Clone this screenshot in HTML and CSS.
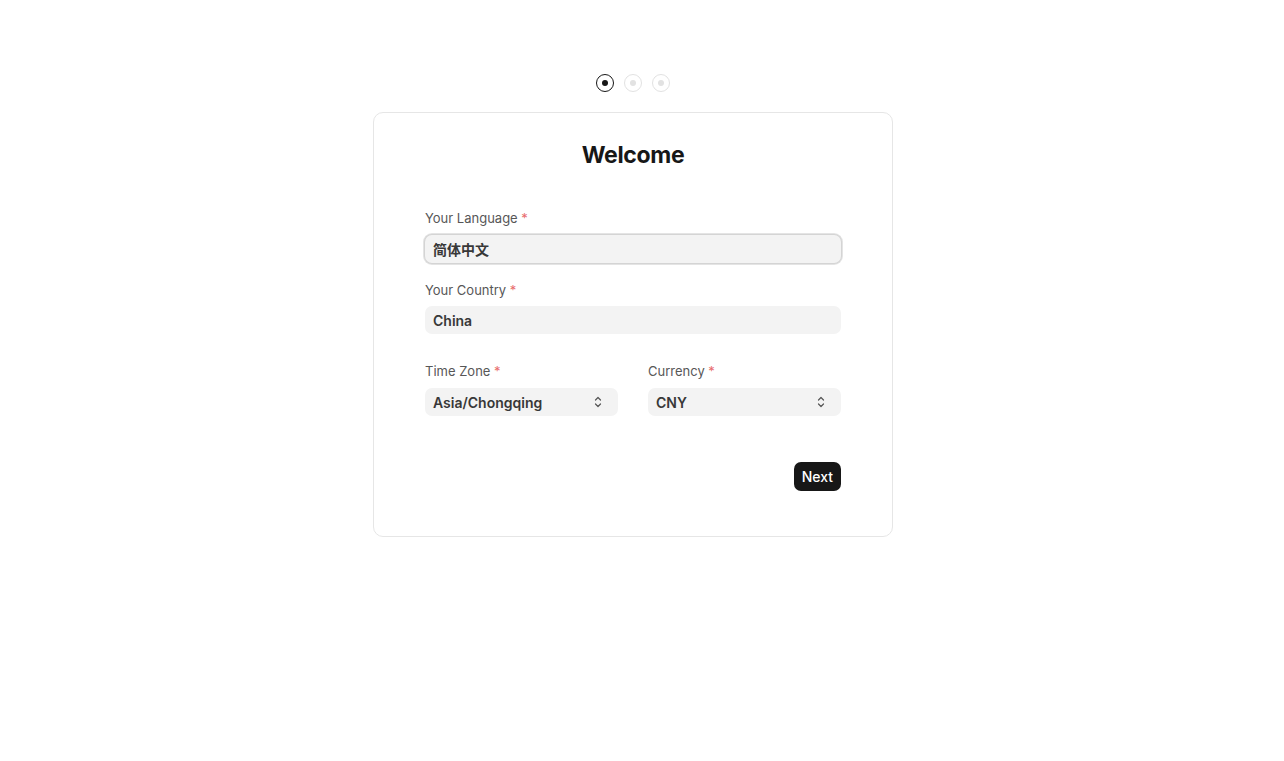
FILE: index.html
```html
<!DOCTYPE html>
<html>
<head>
<meta charset="utf-8">
<link rel="stylesheet" href="styles.css">
</head>
<body>
<div class="page">
  <div class="steps">
    <span class="step active"><span class="dot"></span></span>
    <span class="step"><span class="dot"></span></span>
    <span class="step"><span class="dot"></span></span>
  </div>
  <div class="card">
    <h1 class="title">Welcome</h1>
    <div class="field first">
      <div class="label">Your Language <span class="req">*</span></div>
      <div class="input focused">简体中文</div>
    </div>
    <div class="field second">
      <div class="label">Your Country <span class="req">*</span></div>
      <div class="input">China</div>
    </div>
    <div class="row">
      <div class="field col">
        <div class="label">Time Zone <span class="req">*</span></div>
        <div class="input select"><span>Asia/Chongqing</span>
          <svg class="chev" width="8" height="14" viewBox="0 0 8 14"><path d="M1.5 5 L4 2.5 L6.5 5 M1.5 9 L4 11.5 L6.5 9" fill="none" stroke="#555" stroke-width="1.2" stroke-linecap="round" stroke-linejoin="round"/></svg>
        </div>
      </div>
      <div class="field col">
        <div class="label">Currency <span class="req">*</span></div>
        <div class="input select"><span>CNY</span>
          <svg class="chev" width="8" height="14" viewBox="0 0 8 14"><path d="M1.5 5 L4 2.5 L6.5 5 M1.5 9 L4 11.5 L6.5 9" fill="none" stroke="#555" stroke-width="1.2" stroke-linecap="round" stroke-linejoin="round"/></svg>
        </div>
      </div>
    </div>
    <div class="actions">
      <button class="btn">Next</button>
    </div>
  </div>
</div>
</body>
</html>
```

FILE: styles.css
```css
html, body {
  margin: 0;
  padding: 0;
  background: #fff;
}
body {
  font-family: Inter, "Noto Sans CJK SC", sans-serif;
  color: #171717;
}
.page {
  padding-top: 74px;
  padding-right: 18px;
  display: flex;
  flex-direction: column;
  align-items: center;
}
.steps {
  display: flex;
  gap: 10px;
  height: 18px;
}
.step {
  box-sizing: border-box;
  width: 18px;
  height: 18px;
  border-radius: 50%;
  border: 1.5px solid #e2e2e2;
  display: flex;
  align-items: center;
  justify-content: center;
}
.step .dot {
  width: 6px;
  height: 6px;
  border-radius: 50%;
  background: #e2e2e2;
}
.step.active {
  border-color: #171717;
}
.step.active .dot {
  background: #171717;
}
.card {
  box-sizing: border-box;
  width: 520px;
  margin-top: 20px;
  border: 1px solid #e6e6e6;
  border-radius: 10px;
  padding: 28px 51px 45px;
}
.title {
  margin: 0;
  text-align: center;
  font-size: 23px;
  line-height: 28px;
  font-weight: 700;
  letter-spacing: -0.35px;
  color: #171717;
}
.field {
  margin-top: 20px;
}
.field.first {
  margin-top: 41px;
}
.field.first .label {
  margin-bottom: 9px;
}
.field.second {
  margin-top: 19px;
}
.label {
  font-size: 13px;
  line-height: 16px;
  color: #575757;
  margin-bottom: 8px;
}
.req {
  color: #e86c6c;
}
.input {
  box-sizing: border-box;
  height: 28px;
  border-radius: 7px;
  background: #f3f3f3;
  padding: 0 8px;
  display: flex;
  align-items: center;
  font-size: 14px;
  font-weight: 600;
  color: #383838;
}
.input.focused {
  box-shadow: 0 0 0 1px #d4d4d4, 0 0 0 2px #e4e4e4;
}
.row {
  display: flex;
  gap: 30px;
  margin-top: 29px;
}
.row .field {
  margin-top: 0;
}
.col {
  flex: 1;
}
.row .label {
  margin-bottom: 9px;
}
.select {
  justify-content: space-between;
  padding-right: 16px;
}
.chev {
  display: block;
}
.actions {
  display: flex;
  justify-content: flex-end;
  margin-top: 46px;
}
.btn {
  font-family: Inter, sans-serif;
  height: 29px;
  padding: 0 8px;
  border: none;
  border-radius: 7px;
  background: #171717;
  color: #fff;
  font-size: 14px;
  font-weight: 500;
  cursor: pointer;
}
```
